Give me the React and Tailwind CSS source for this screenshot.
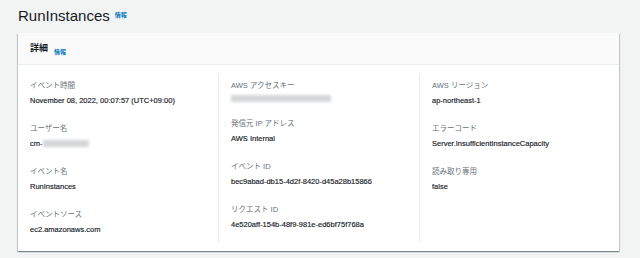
const columns = [
  [
    { label: "イベント時間", value: "November 08, 2022, 00:07:57 (UTC+09:00)" },
    { label: "ユーザー名", value: "cm-", blur: "w-[46px]" },
    { label: "イベント名", value: "RunInstances" },
    { label: "イベントソース", value: "ec2.amazonaws.com" },
  ],
  [
    { label: "AWS アクセスキー", value: "", blur: "w-[100px]" },
    { label: "発信元 IP アドレス", value: "AWS Internal" },
    { label: "イベント ID", value: "bec9abad-db15-4d2f-8420-d45a28b15866" },
    { label: "リクエスト ID", value: "4e520aff-154b-48f9-981e-ed6bf75f768a" },
  ],
  [
    { label: "AWS リージョン", value: "ap-northeast-1" },
    { label: "エラーコード", value: "Server.InsufficientInstanceCapacity" },
    { label: "読み取り専用", value: "false" },
  ],
];

function Info() {
  return <span className="text-[6px] font-bold text-[#0073bb]">情報</span>;
}

export default function App() {
  return (
    <div
      className="w-[640px] h-[258px] bg-[#f2f3f3] overflow-hidden"
      style={{ fontFamily: '"Liberation Sans", "Noto Sans CJK JP", sans-serif' }}
    >
      <div className="flex items-end gap-[5px] pl-[18px] pt-[3px] h-[33px] pb-[8px]">
        <h1 className="text-[15px] leading-[18px] text-[#16191f]">RunInstances</h1>
        <span className="mb-[1px]"><Info /></span>
      </div>

      <div className="ml-[18px] w-[601px] bg-white shadow-[0_1px_1px_0_rgba(0,28,36,0.3),1px_1px_1px_0_rgba(0,28,36,0.15),-1px_1px_1px_0_rgba(0,28,36,0.15)]">
        <div className="h-[32px] bg-[#fafafa] border-b border-[#eaeded] flex items-center gap-[6px] px-[12px]">
          <span className="text-[9px] font-bold text-[#16191f]">詳細</span>
          <span className="mt-[1px]"><Info /></span>
        </div>
        <div className="grid grid-cols-[200px_201px_200px] pt-[9px] pb-[9px]">
          {columns.map((col, i) => (
            <div
              key={i}
              className={`flex flex-col gap-[16.5px] px-[12px] pt-[6px] pb-[6px] ${i > 0 ? "border-l border-[#eaeded]" : ""}`}
            >
              {col.map((item, j) => (
                <div key={j} className="flex flex-col gap-[2.5px]">
                  <div className="text-[7.5px] leading-[12px] text-[#687078]">{item.label}</div>
                  <div className="flex items-center text-[7.5px] leading-[12px] font-medium text-[#16191f] [-webkit-text-stroke:0.15px_#16191f]">
                    {item.value}
                    {item.blur && (
                      <span className={`${item.blur} h-[7px] bg-[#d4d6d8] blur-[1.5px]`} />
                    )}
                  </div>
                </div>
              ))}
            </div>
          ))}
        </div>
      </div>
    </div>
  );
}
